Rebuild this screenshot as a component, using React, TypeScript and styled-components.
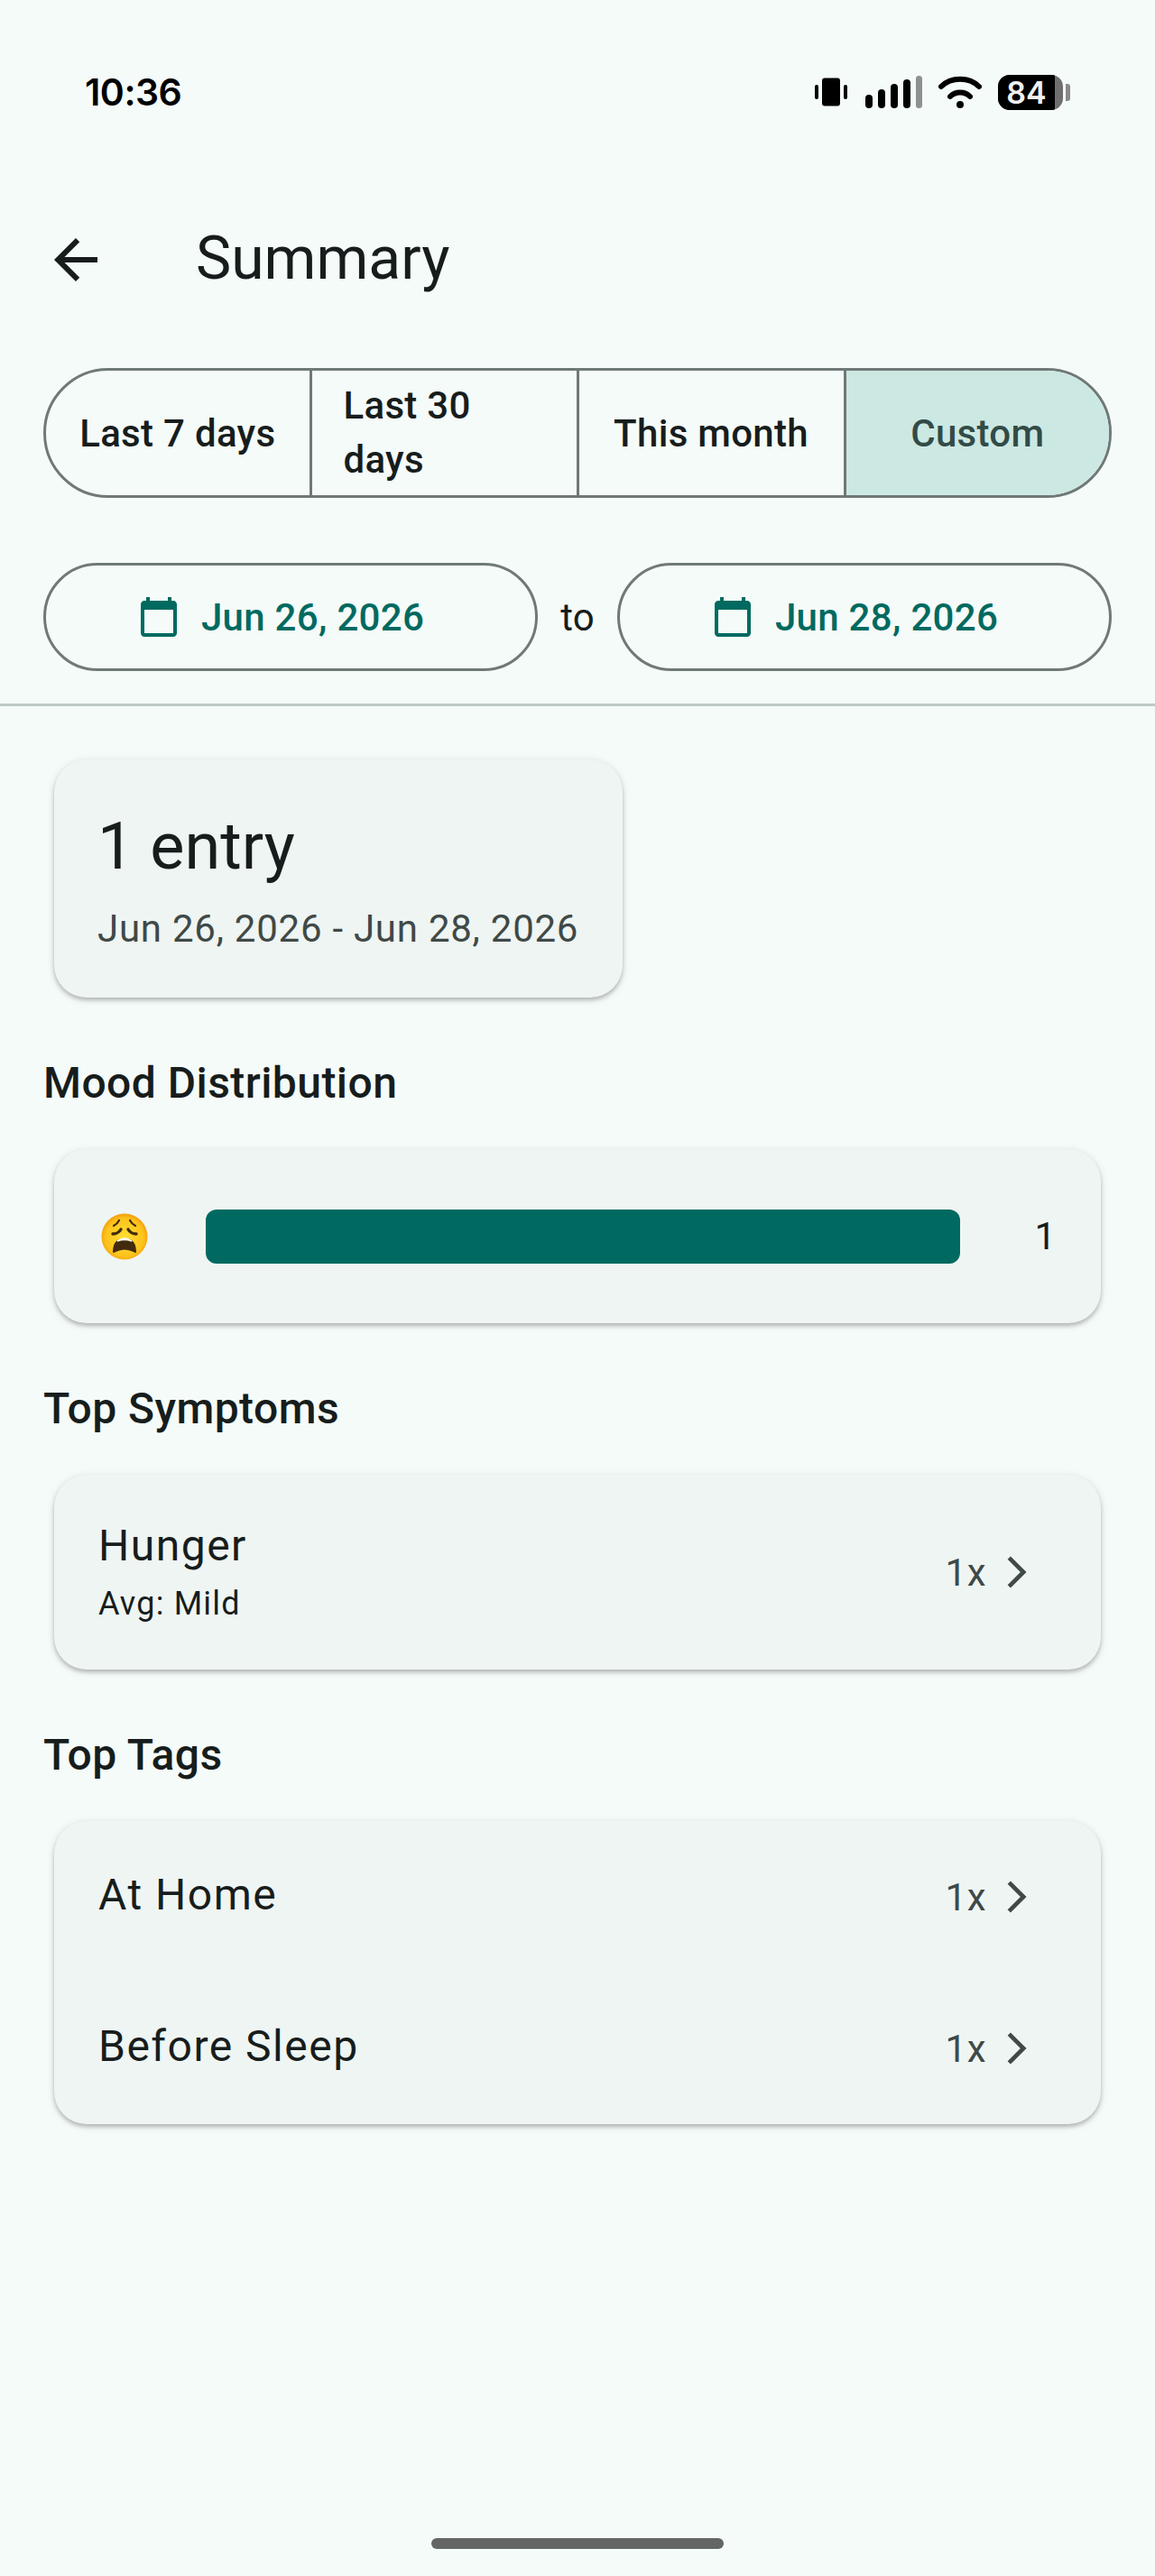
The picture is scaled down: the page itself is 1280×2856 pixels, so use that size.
import React from 'react';
import styled, { createGlobalStyle } from 'styled-components';

const GlobalStyle = createGlobalStyle`
  html, body {
    margin: 0;
    padding: 0;
    background: #f5fbf9;
  }
  * {
    box-sizing: border-box;
  }
`;

const Page = styled.div`
  width: 1280px;
  height: 2856px;
  display: flex;
  flex-direction: column;
  overflow: hidden;
  background: #f5fbf9;
  color: #171d1c;
  font-family: Roboto, 'Liberation Sans', sans-serif;
`;

const StatusBar = styled.div`
  height: 204px;
  flex: none;
  display: flex;
  align-items: center;
  justify-content: space-between;
  padding: 0 94px 0 94px;
`;

const Time = styled.span`
  font-family: Inter, Roboto, sans-serif;
  font-size: 41px;
  font-weight: 600;
  letter-spacing: -0.5px;
  color: #000;
`;

const StatusIcons = styled.div`
  display: flex;
  align-items: center;
`;

const Battery = styled.div`
  display: flex;
  align-items: center;
  margin-left: 18px;
`;

const BatteryBody = styled.div`
  width: 72px;
  height: 39px;
  display: flex;
  border-radius: 13px;
  overflow: hidden;
  background: #6f6f6f;
`;

const BatteryLevel = styled.div`
  width: 63px;
  background: #000;
  color: #f0f0f0;
  font-family: Inter, Roboto, sans-serif;
  font-size: 34px;
  font-weight: 600;
  line-height: 39px;
  text-align: center;
`;

const BatteryNub = styled.div`
  width: 5px;
  height: 19px;
  margin-left: 3px;
  border-radius: 0 3px 3px 0;
  background: #8a8a8a;
`;

const Toolbar = styled.header`
  height: 168px;
  flex: none;
  display: flex;
  align-items: center;
  padding-left: 48px;
  gap: 97px;
`;

const BackIcon = styled.svg`
  width: 72px;
  height: 72px;
  fill: #171d1c;
  flex: none;
`;

const Title = styled.h1`
  margin: 0 0 2px;
  font-size: 66px;
  font-weight: 400;
  line-height: 84px;
`;

const Segments = styled.div`
  height: 144px;
  flex: none;
  margin: 36px 48px 0;
  display: grid;
  grid-template-columns: 294.5px 296px 296px 1fr;
  border: 3px solid #6f7977;
  border-radius: 72px;
  overflow: hidden;
`;

const Segment = styled.div<{ $selected?: boolean }>`
  display: flex;
  align-items: center;
  justify-content: center;
  padding: 0 35px;
  font-size: 42px;
  font-weight: 500;
  line-height: 60px;
  letter-spacing: 0.3px;
  color: ${(p) => (p.$selected ? '#324b47' : '#171d1c')};
  background: ${(p) => (p.$selected ? '#cce8e2' : 'transparent')};
  &:not(:last-child) {
    border-right: 3px solid #6f7977;
  }
`;

const SegmentLabel = styled.span<{ $wrap?: boolean }>`
  width: ${(p) => (p.$wrap ? '100%' : 'auto')};
  margin-top: ${(p) => (p.$wrap ? '0' : '2px')};
  white-space: ${(p) => (p.$wrap ? 'normal' : 'nowrap')};
`;

const DateRow = styled.div`
  height: 120px;
  flex: none;
  margin: 72px 48px 0;
  display: flex;
  align-items: stretch;
`;

const DateButton = styled.div`
  flex: 1;
  display: flex;
  align-items: center;
  justify-content: center;
  gap: 23px;
  padding-right: 22px;
  border: 3px solid #6f7977;
  border-radius: 60px;
  font-size: 42px;
  font-weight: 500;
  letter-spacing: 0.3px;
  color: #006a60;
`;

const CalendarIcon = styled.svg`
  width: 48px;
  height: 48px;
  fill: #006a60;
  flex: none;
`;

const DateSeparator = styled.span`
  width: 88px;
  flex: none;
  align-self: center;
  text-align: center;
  font-size: 42px;
`;

const Divider = styled.hr`
  flex: none;
  height: 3px;
  margin: 36px 0 0;
  border: 0;
  background: #bec9c6;
`;

const Content = styled.main`
  flex: 1;
  display: flex;
  flex-direction: column;
  padding: 0 48px;
`;

const Card = styled.section`
  margin: 0 12px;
  border-radius: 36px;
  background: #eff5f3;
  box-shadow: 0 3px 4px rgba(0, 0, 0, 0.22), 0 2px 9px 2px rgba(0, 0, 0, 0.07);
`;

const TotalCard = styled(Card)`
  width: 630px;
  height: 264px;
  margin-top: 59px;
  padding: 55px 0 0 48px;
`;

const TotalCount = styled.div`
  font-size: 72px;
  line-height: 84px;
`;

const TotalRange = styled.div`
  margin-top: 21px;
  font-size: 42px;
  line-height: 56px;
  letter-spacing: 0.75px;
  color: #3f4947;
`;

const SectionHeading = styled.h2`
  height: 60px;
  margin: 65px 0 43px;
  font-size: 48px;
  font-weight: 500;
  line-height: 60px;
  letter-spacing: 0.45px;
`;

const MoodRow = styled(Card)`
  height: 193px;
  display: flex;
  align-items: center;
  padding: 0 50px 0 52px;
`;

const Emoji = styled.svg`
  width: 52px;
  height: 52px;
  flex: none;
  margin-right: 64px;
`;

const MoodBar = styled.div`
  flex: 1;
  height: 60px;
  border-radius: 12px;
  background: #006a60;
`;

const MoodCount = styled.span`
  width: 106px;
  flex: none;
  text-align: right;
  font-size: 42px;
`;

const ListCard = styled(Card)`
  padding: 0;
`;

const ListRow = styled.div<{ $tall?: boolean }>`
  height: ${(p) => (p.$tall ? '216px' : '168px')};
  display: flex;
  align-items: center;
  padding: 0 61px 0 49px;
`;

const RowText = styled.div`
  flex: 1;
  min-width: 0;
`;

const TagText = styled(RowText)`
  padding-bottom: 4px;
`;

const RowTitle = styled.div`
  font-size: 48px;
  line-height: 60px;
  letter-spacing: 1.5px;
`;

const RowSubtitle = styled.div`
  margin-top: 10px;
  font-size: 36px;
  line-height: 48px;
  letter-spacing: 1.2px;
  color: #171d1c;
`;

const RowCount = styled.span`
  font-size: 42px;
  letter-spacing: 0.5px;
  color: #3f4947;
`;

const Chevron = styled.svg`
  width: 66px;
  height: 66px;
  fill: none;
  stroke: #3f4947;
  stroke-width: 1.7;
  flex: none;
`;

const HomeIndicator = styled.div`
  width: 324px;
  height: 12px;
  flex: none;
  align-self: center;
  margin-bottom: 30px;
  border-radius: 6px;
  background: #636665;
`;

function VibrateIcon() {
  return (
    <svg width="36" height="32" viewBox="0 0 36 32" fill="#000">
      <rect x="8" y="0.5" width="20" height="31" rx="3" />
      <rect x="0" y="8" width="4" height="16" rx="2" />
      <rect x="32" y="8" width="4" height="16" rx="2" />
    </svg>
  );
}

function SignalIcon() {
  const bars = [21, 15, 9, 4];
  return (
    <svg width="63" height="36" viewBox="0 0 63 36" style={{ marginLeft: 20 }}>
      {bars.map((top, i) => (
        <rect key={top} x={i * 14} y={top} width="8" height={36 - top} rx="4" fill="#000" />
      ))}
      <rect x="56" y="0" width="7" height="36" rx="3.5" fill="#8d9190" />
    </svg>
  );
}

function WifiIcon() {
  return (
    <svg width="48" height="36" viewBox="0 0 48 36" fill="none" style={{ marginLeft: 18 }}>
      <path d="M3 12 C14 1 34 1 45 12" stroke="#000" strokeWidth="6" strokeLinecap="round" />
      <path d="M13 23 C19 17 29 17 35 23" stroke="#000" strokeWidth="6" strokeLinecap="round" />
      <circle cx="24" cy="32" r="4" fill="#000" />
    </svg>
  );
}

function WearyFace() {
  return (
    <Emoji viewBox="0 0 52 52">
      <defs>
        <radialGradient id="wearyFace" cx="50%" cy="52%" r="52%">
          <stop offset="0%" stopColor="#fee133" />
          <stop offset="80%" stopColor="#fcc21b" />
          <stop offset="100%" stopColor="#f59e0b" />
        </radialGradient>
      </defs>
      <circle cx="26" cy="26" r="25.5" fill="url(#wearyFace)" />
      <path d="M14 14 Q18 12 20 8" stroke="#422b0d" strokeWidth="2.2" fill="none" strokeLinecap="round" />
      <path d="M38 14 Q34 12 32 8" stroke="#422b0d" strokeWidth="2.2" fill="none" strokeLinecap="round" />
      <path d="M13 23 Q19 23 22 18" stroke="#422b0d" strokeWidth="3.4" fill="none" strokeLinecap="round" />
      <path d="M39 23 Q33 23 30 18" stroke="#422b0d" strokeWidth="3.4" fill="none" strokeLinecap="round" />
      <path d="M13 43 Q13 28 26 28 Q39 28 39 43 Q39 45 36 43 Q26 38 16 43 Q13 45 13 43 Z" fill="#422b0d" />
      <path d="M18 31 Q26 25 34 31 Q26 28 18 31 Z" fill="#fff" stroke="#fff" strokeWidth="1.5" />
    </Emoji>
  );
}

function ChevronRight() {
  return (
    <Chevron viewBox="0 0 24 24">
      <path d="M9.2 6.2L15 12l-5.8 5.8" />
    </Chevron>
  );
}

function DateField({ label }: { label: string }) {
  return (
    <DateButton>
      <CalendarIcon viewBox="0 0 24 24">
        <path d="M20 3h-1V1h-2v2H7V1H5v2H4c-1.1 0-2 .9-2 2v16c0 1.1.9 2 2 2h16c1.1 0 2-.9 2-2V5c0-1.1-.9-2-2-2zm0 18H4V8h16v13z" />
      </CalendarIcon>
      {label}
    </DateButton>
  );
}

export default function App() {
  return (
    <Page>
      <GlobalStyle />
      <StatusBar>
        <Time>10:36</Time>
        <StatusIcons>
          <VibrateIcon />
          <SignalIcon />
          <WifiIcon />
          <Battery>
            <BatteryBody>
              <BatteryLevel>84</BatteryLevel>
            </BatteryBody>
            <BatteryNub />
          </Battery>
        </StatusIcons>
      </StatusBar>

      <Toolbar>
        <BackIcon viewBox="0 0 24 24">
          <path d="M20 11H7.83l5.59-5.59L12 4l-8 8 8 8 1.41-1.41L7.83 13H20v-2z" />
        </BackIcon>
        <Title>Summary</Title>
      </Toolbar>

      <Segments>
        <Segment><SegmentLabel>Last 7 days</SegmentLabel></Segment>
        <Segment><SegmentLabel $wrap>Last 30 days</SegmentLabel></Segment>
        <Segment><SegmentLabel>This month</SegmentLabel></Segment>
        <Segment $selected><SegmentLabel>Custom</SegmentLabel></Segment>
      </Segments>

      <DateRow>
        <DateField label="Jun 26, 2026" />
        <DateSeparator>to</DateSeparator>
        <DateField label="Jun 28, 2026" />
      </DateRow>

      <Divider />

      <Content>
        <TotalCard>
          <TotalCount>1 entry</TotalCount>
          <TotalRange>Jun 26, 2026 - Jun 28, 2026</TotalRange>
        </TotalCard>

        <SectionHeading>Mood Distribution</SectionHeading>
        <MoodRow>
          <WearyFace />
          <MoodBar />
          <MoodCount>1</MoodCount>
        </MoodRow>

        <SectionHeading>Top Symptoms</SectionHeading>
        <ListCard>
          <ListRow $tall>
            <RowText>
              <RowTitle>Hunger</RowTitle>
              <RowSubtitle>Avg: Mild</RowSubtitle>
            </RowText>
            <RowCount>1x</RowCount>
            <ChevronRight />
          </ListRow>
        </ListCard>

        <SectionHeading>Top Tags</SectionHeading>
        <ListCard>
          <ListRow>
            <TagText><RowTitle>At Home</RowTitle></TagText>
            <RowCount>1x</RowCount>
            <ChevronRight />
          </ListRow>
          <ListRow>
            <TagText><RowTitle>Before Sleep</RowTitle></TagText>
            <RowCount>1x</RowCount>
            <ChevronRight />
          </ListRow>
        </ListCard>
      </Content>

      <HomeIndicator />
    </Page>
  );
}
